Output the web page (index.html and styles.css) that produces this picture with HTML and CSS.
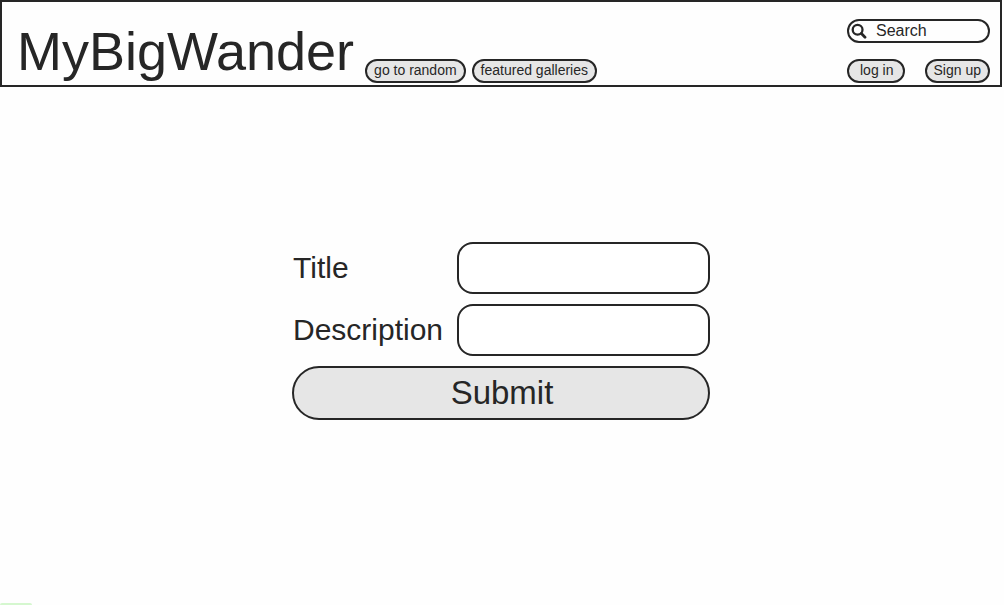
FILE: index.html
```html
<!DOCTYPE html>
<html lang="en">
<head>
<meta charset="utf-8">
<meta name="viewport" content="width=device-width, initial-scale=1">
<title>MyBigWander</title>
<link rel="stylesheet" href="styles.css">
</head>
<body>
<header class="site-header">
  <h1 class="brand">MyBigWander</h1>
  <nav class="nav">
    <button class="pill" type="button">go to random</button>
    <button class="pill" type="button">featured galleries</button>
  </nav>
  <div class="tools">
    <div class="search">
      <svg class="search-icon" viewBox="0 0 16 16" aria-hidden="true">
        <circle cx="6.6" cy="6.8" r="4.9" fill="none" stroke="currentColor" stroke-width="2.3"/>
        <path d="M10.4 10.6L14 14.2" stroke="currentColor" stroke-width="2.8" stroke-linecap="round"/>
      </svg>
      <input class="search-input" type="search" placeholder="Search" aria-label="Search">
    </div>
    <div class="account">
      <button class="pill" type="button">log in</button>
      <button class="pill pill-snug" type="button">Sign up</button>
    </div>
  </div>
</header>
<main class="content">
  <form class="gallery-form">
    <label class="label" for="title">Title</label>
    <input class="field" id="title" type="text">
    <label class="label" for="description">Description</label>
    <input class="field" id="description" type="text">
    <button class="submit" type="submit">Submit</button>
  </form>
</main>
<div class="status-bar"></div>
</body>
</html>
```

FILE: styles.css
```css
:root {
  --ink: #262626;
  --fill: #e6e6e6;
}

* {
  box-sizing: border-box;
}

body {
  display: flex;
  flex-direction: column;
  min-height: 100vh;
  margin: 0;
  padding-right: 2px;
  background: #fefefe;
  color: var(--ink);
  font-family: "Liberation Sans", Arial, sans-serif;
}

button,
input {
  color: inherit;
  font-family: inherit;
}

.site-header {
  display: flex;
  align-items: flex-end;
  gap: 11px;
  padding: 17px 10px 2px 15px;
  border: 2px solid var(--ink);
}

.brand {
  margin: 0;
  padding-bottom: 1px;
  font-size: 54px;
  font-weight: 400;
  line-height: 62px;
}

.nav {
  display: flex;
  gap: 6px;
}

.pill {
  height: 24px;
  padding: 0 7px 2px;
  border: 2px solid var(--ink);
  border-radius: 12px;
  background: var(--fill);
  font-size: 14px;
  line-height: 18px;
  white-space: nowrap;
}

.tools {
  display: flex;
  flex-direction: column;
  gap: 16px;
  width: 143px;
  margin-left: auto;
}

.search {
  display: flex;
  align-items: center;
  gap: 9px;
  height: 24px;
  padding: 0 10px 0 2px;
  border: 2px solid var(--ink);
  border-radius: 12px;
}

.search-icon {
  flex: none;
  width: 16px;
  height: 16px;
}

.search-input {
  flex: 1;
  min-width: 0;
  padding: 0;
  border: 0;
  outline: 0;
  background: none;
  font-size: 16px;
  line-height: 20px;
  appearance: none;
}

.search-input::placeholder {
  color: inherit;
  opacity: 1;
}

.account {
  display: flex;
  justify-content: space-between;
}

.account .pill {
  padding: 0 10px 2px 11px;
}

.account .pill-snug {
  padding: 0 7px 2px;
}

.content {
  display: flex;
  flex: 1;
  align-items: center;
  justify-content: center;
  padding: 16px 16px 44px;
}

.gallery-form {
  display: grid;
  grid-template-columns: 165px minmax(0, 253px);
  row-gap: 10px;
  align-items: center;
}

.label {
  padding-left: 1px;
  font-size: 30px;
  line-height: 34px;
}

.field {
  width: 100%;
  height: 52px;
  padding: 0 14px;
  border: 2px solid var(--ink);
  border-radius: 16px;
  background: #fff;
  font-size: 30px;
}

.submit {
  grid-column: 1 / -1;
  height: 54px;
  padding: 0 18px 0 20px;
  border: 2px solid var(--ink);
  border-radius: 27px;
  background: var(--fill);
  font-size: 33px;
}

.status-bar {
  width: 32px;
  height: 2px;
  border-radius: 2px 2px 0 0;
  background: #d5f7cf;
}
```
